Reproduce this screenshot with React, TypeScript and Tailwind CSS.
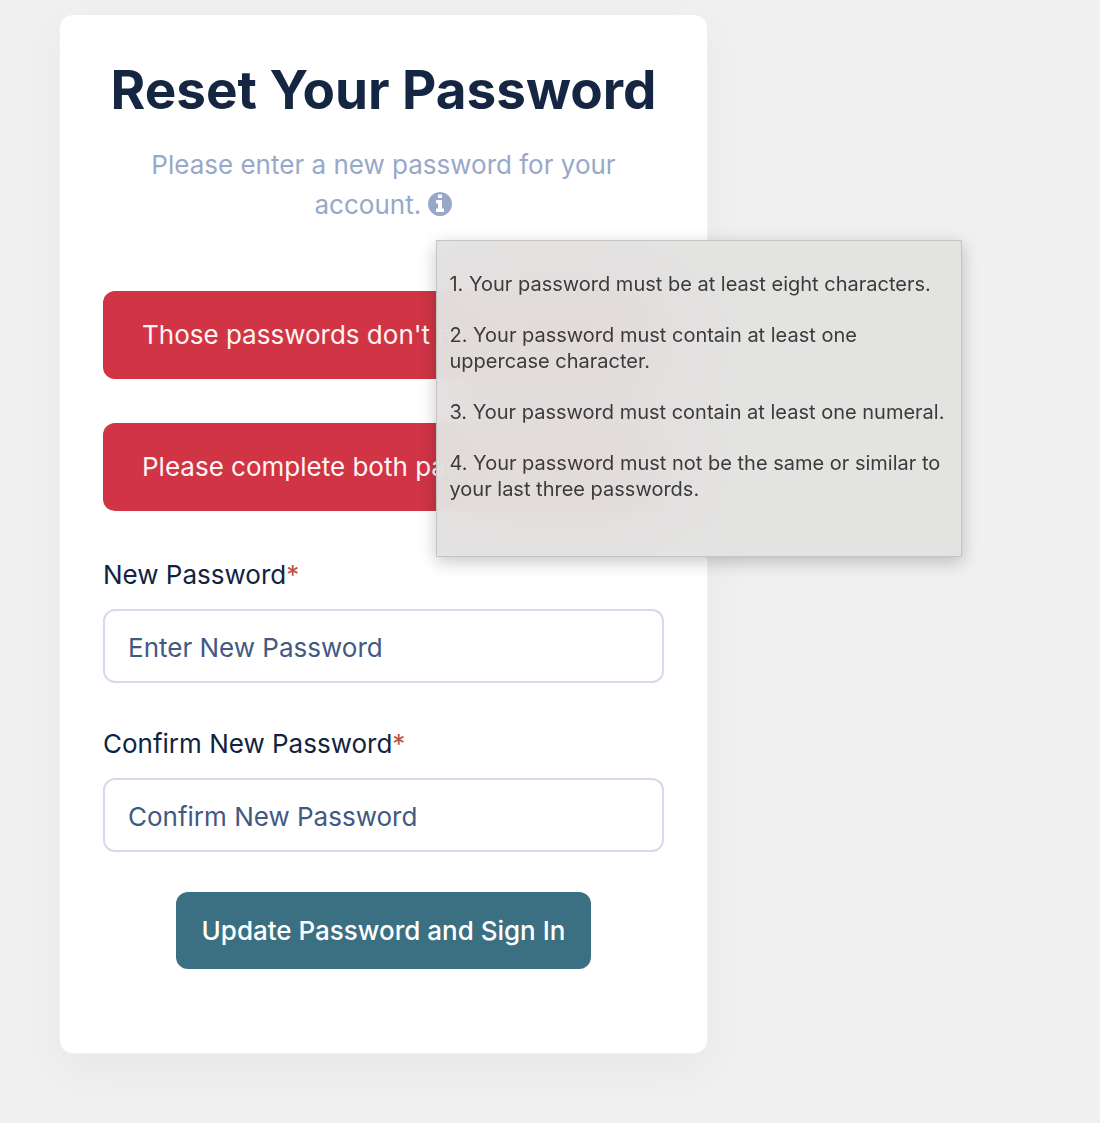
import { useState } from "react";

const alerts = ["Those passwords don't match.", "Please complete both passwords."];

const rules = [
  "1. Your password must be at least eight characters.",
  "2. Your password must contain at least one uppercase character.",
  "3. Your password must contain at least one numeral.",
  "4. Your password must not be the same or similar to your last three passwords.",
];

type FieldProps = {
  id: string;
  label: string;
  placeholder: string;
};

const InfoIcon = () => (
  <svg viewBox="128 128 1536 1536" fill="currentColor" className="size-6" aria-hidden="true">
    <path d="M1152 1376v-160q0-14-9-23t-23-9h-96V672q0-14-9-23t-23-9H672q-14 0-23 9t-9 23v160q0 14 9 23t23 9h96v320h-96q-14 0-23 9t-9 23v160q0 14 9 23t23 9h448q14 0 23-9t9-23zm-128-896V320q0-14-9-23t-23-9H800q-14 0-23 9t-9 23v160q0 14 9 23t23 9h192q14 0 23-9t9-23zm640 416q0 209-103 385.5T1281.5 1561 896 1664t-385.5-103T231 1281.5 128 896t103-385.5T510.5 231 896 128t385.5 103T1561 510.5 1664 896z" />
  </svg>
);

const Field = ({ id, label, placeholder }: FieldProps) => {
  const [value, setValue] = useState("");

  return (
    <div className="flex flex-col gap-4">
      <label htmlFor={id} className="text-[26px] leading-9 text-[#12233f]">
        {label}
        <span className="text-[#c0503f]">*</span>
      </label>
      <input
        id={id}
        type="password"
        value={value}
        placeholder={placeholder}
        onChange={(e) => setValue(e.target.value)}
        className="h-[74px] w-full rounded-xl border-2 border-[#d4dcea] bg-white px-[23px] pt-0.5 text-[26px] text-[#12233f] placeholder:text-[#425981] focus:outline-none"
      />
    </div>
  );
};

const PasswordRules = () => {
  return (
    <span className="relative inline-block align-[-2px]">
      <button type="button" aria-label="Password rules" aria-describedby="rules" className="block">
        <InfoIcon />
      </button>
      <div
        id="rules"
        role="tooltip"
        className="absolute top-12 left-2 z-10 flex h-[317px] w-[526px] flex-col gap-[25px] border border-[#c4c4c4] bg-[#e2e1e0]/95 pt-[30px] pr-1 pl-3 text-left text-[20px] leading-[26px] text-[#3c3b3b] shadow-[0_5px_16px_rgba(0,0,0,0.22)] backdrop-blur-2xl"
      >
        {rules.map((rule) => (
          <p key={rule}>{rule}</p>
        ))}
      </div>
    </span>
  );
};

const App = () => {
  return (
    <main className="min-h-screen bg-[#f0f0f0] px-[59px] pt-3.5 pb-[70px] font-['Inter',sans-serif]">
      <section className="w-full max-w-[649px] rounded-[14px] border border-[#edf0f5] bg-white px-[43px] pt-10 pb-[84px] shadow-[0_16px_48px_rgba(18,38,63,0.04)]">
        <h1 className="text-center text-[53px] leading-[70px] font-bold text-[#152642]">
          Reset Your Password
        </h1>
        <p className="mt-5 text-center text-[26px] leading-10 text-[#98a8c9]">
          Please enter a new password for your account. <PasswordRules />
        </p>

        <div className="mt-[66px] flex flex-col gap-11">
          {alerts.map((text) => (
            <div
              key={text}
              role="alert"
              className="rounded-xl bg-[#d03445] px-[39px] py-6 text-[26px] leading-10 text-[#fff4f4]"
            >
              {text}
            </div>
          ))}
        </div>

        <form className="mt-[46px] flex flex-col gap-10" onSubmit={(e) => e.preventDefault()}>
          <div className="flex flex-col gap-[43px]">
            <Field id="new-password" label="New Password" placeholder="Enter New Password" />
            <Field id="confirm-password" label="Confirm New Password" placeholder="Confirm New Password" />
          </div>
          <button
            type="submit"
            className="h-[77px] cursor-pointer self-center rounded-xl bg-[#3b7083] px-[26px] text-[26px] font-medium text-white"
          >
            Update Password and Sign In
          </button>
        </form>
      </section>
    </main>
  );
};

export default App;
